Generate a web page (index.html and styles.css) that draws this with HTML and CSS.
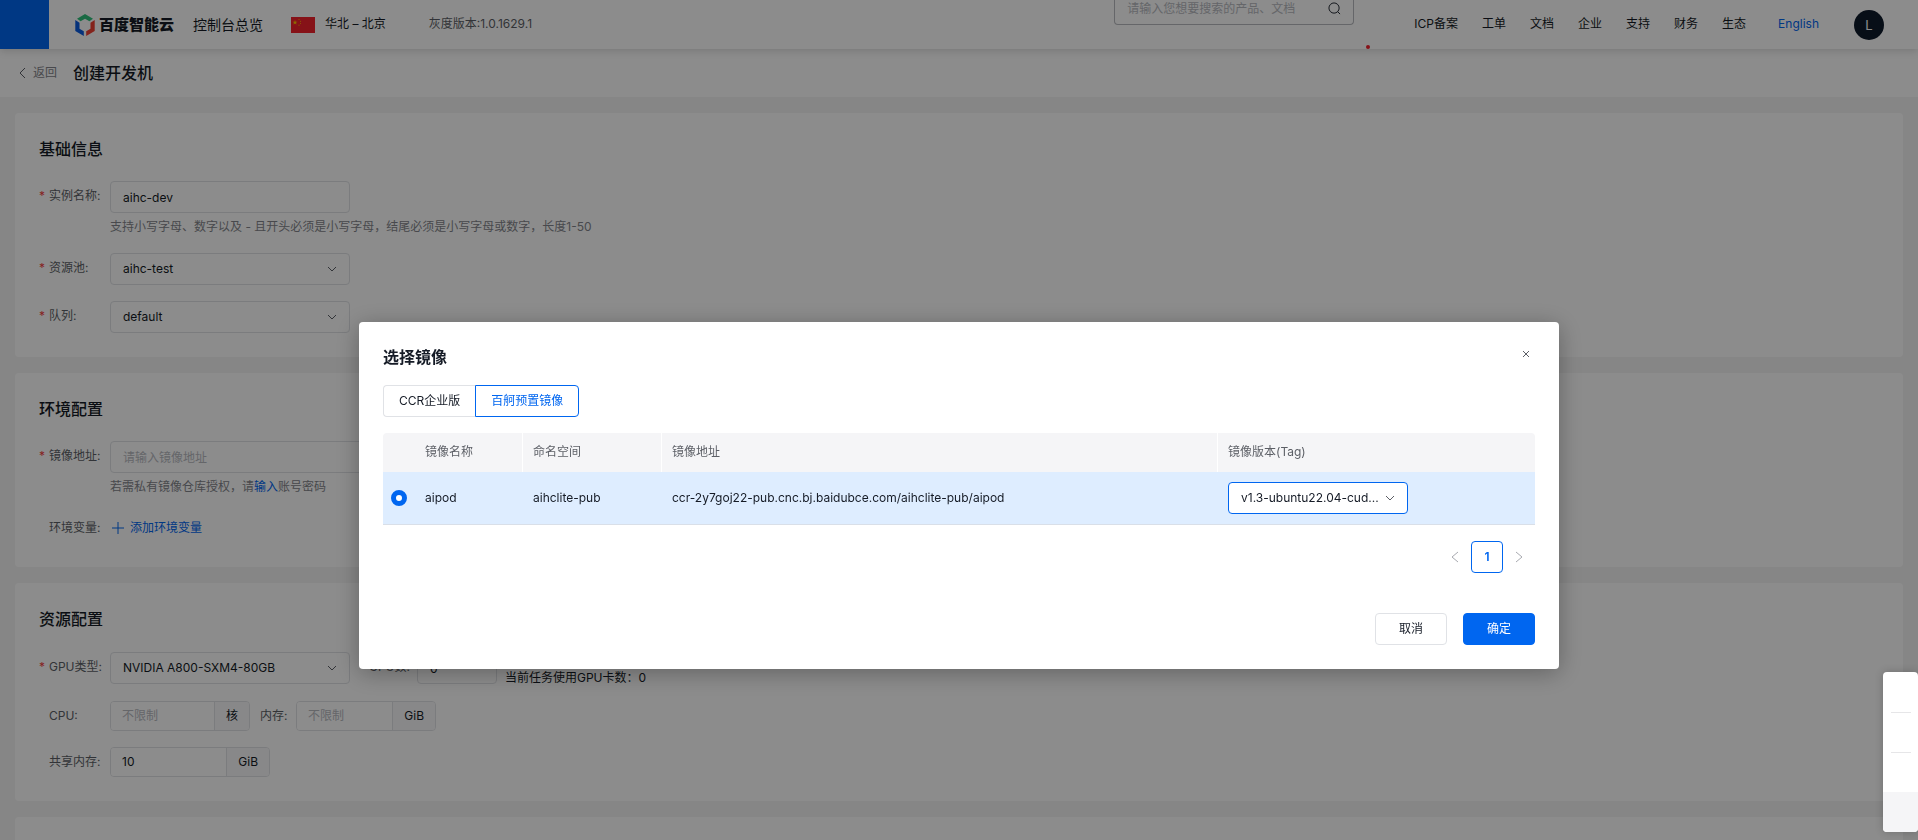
FILE: index.html
```html
<!DOCTYPE html>
<html lang="zh-CN">
<head>
<meta charset="utf-8">
<title>创建开发机</title>
<link rel="stylesheet" href="styles.css">
</head>
<body>
<svg class="defs" aria-hidden="true">
  <symbol id="chevron-down" viewBox="0 0 10 10"><path d="M1 3l4 4 4-4" fill="none" stroke="currentColor"/></symbol>
  <symbol id="chevron-left" viewBox="0 0 12 12"><path d="M9 1L4 6l5 5" fill="none" stroke="currentColor"/></symbol>
  <symbol id="chevron-right" viewBox="0 0 12 12"><path d="M3 1l6 5-6 5" fill="none" stroke="currentColor"/></symbol>
</svg>

<div class="page">
  <header class="topbar">
    <button class="menu" type="button" aria-label="菜单"></button>
    <a class="logo" href="#">
      <svg class="logo-mark" viewBox="0 0 20 22" aria-hidden="true">
        <path fill="#30c27c" d="M10 0l8 4.700-3.600 2.600L10 4.800 5.600 7.300 2 4.700z"/>
        <path fill="#0a5be0" d="M.3 6l4.200 2.700v6l4.300 2.500V22L.3 17z"/>
        <path fill="#f04134" d="M19.700 6l-4.200 2.700v6l-4.300 2.500V22l8.500-5z"/>
      </svg>
      <span>百度智能云</span>
    </a>
    <a class="overview" href="#">控制台总览</a>
    <div class="region">
      <svg class="flag" viewBox="0 0 24 16" aria-hidden="true">
        <rect width="24" height="16" fill="#f5222d"/>
        <path fill="#ffc400" d="M4 3l.6 1.700h1.800L5 5.800l.5 1.800L4 6.500 2.500 7.600 3 5.800 1.600 4.700h1.800z"/>
        <g fill="#ffa000"><circle cx="8" cy="2.500" r=".6"/><circle cx="9.500" cy="4.300" r=".6"/><circle cx="9.500" cy="6.500" r=".6"/><circle cx="8" cy="8.200" r=".6"/></g>
      </svg>
      <span>华北 – 北京</span>
    </div>
    <span class="version">灰度版本:1.0.1629.1</span>
    <div class="search">
      <input type="text" aria-label="搜索" placeholder="请输入您想要搜索的产品、文档">
      <svg viewBox="0 0 14 14" aria-hidden="true"><circle cx="6.500" cy="6.500" r="5.500" fill="none" stroke="currentColor"/><path d="M10.500 10.500L13 13" stroke="currentColor"/></svg>
    </div>
    <i class="dot"></i>
    <nav class="nav">
      <a href="#">ICP备案</a>
      <a href="#">工单</a>
      <a href="#">文档</a>
      <a href="#">企业</a>
      <a href="#">支持</a>
      <a href="#">财务</a>
      <a href="#">生态</a>
    </nav>
    <a class="lang" href="#">English</a>
    <button class="avatar" type="button">L</button>
  </header>

  <div class="subbar">
    <a class="back" href="#"><svg viewBox="0 0 12 12" aria-hidden="true"><use href="#chevron-left"/></svg>返回</a>
    <h1>创建开发机</h1>
  </div>

  <main class="content">
    <section class="card">
      <h2>基础信息</h2>
      <div class="row">
        <label class="label required" for="name">实例名称:</label>
        <div>
          <input class="field" id="name" type="text" value="aihc-dev">
          <p class="hint">支持小写字母、数字以及 - 且开头必须是小写字母，结尾必须是小写字母或数字，长度1-50</p>
        </div>
      </div>
      <div class="row">
        <label class="label required" for="pool">资源池:</label>
        <div class="select">
          <select class="field" id="pool"><option>aihc-test</option></select>
          <svg aria-hidden="true"><use href="#chevron-down"/></svg>
        </div>
      </div>
      <div class="row">
        <label class="label required" for="queue">队列:</label>
        <div class="select">
          <select class="field" id="queue"><option>default</option></select>
          <svg aria-hidden="true"><use href="#chevron-down"/></svg>
        </div>
      </div>
    </section>

    <section class="card">
      <h2>环境配置</h2>
      <div class="row">
        <label class="label required" for="image">镜像地址:</label>
        <div>
          <input class="field wide" id="image" type="text" placeholder="请输入镜像地址">
          <p class="hint">若需私有镜像仓库授权，请<a href="#">输入</a>账号密码</p>
        </div>
      </div>
      <div class="row">
        <span class="label">环境变量:</span>
        <button class="add" type="button"><svg viewBox="0 0 14 14" aria-hidden="true"><path d="M7 1v12M1 7h12" stroke="currentColor"/></svg>添加环境变量</button>
      </div>
    </section>

    <section class="card">
      <h2>资源配置</h2>
      <div class="row gpu">
        <label class="label required" for="gpu">GPU类型:</label>
        <div class="select">
          <select class="field" id="gpu"><option>NVIDIA A800-SXM4-80GB</option></select>
          <svg aria-hidden="true"><use href="#chevron-down"/></svg>
        </div>
        <label class="label inline-gpu" for="gpu-count">GPU数:</label>
        <input class="field count" id="gpu-count" type="text" value="0">
        <span class="usage">当前任务使用GPU卡数：0</span>
      </div>
      <div class="row">
        <label class="label" for="cpu">CPU:</label>
        <div class="group cpu"><input id="cpu" type="text" placeholder="不限制"><span>核</span></div>
        <label class="label inline-mem" for="mem">内存:</label>
        <div class="group mem"><input id="mem" type="text" placeholder="不限制"><span>GiB</span></div>
      </div>
      <div class="row">
        <label class="label" for="shm">共享内存:</label>
        <div class="group shm"><input id="shm" type="text" value="10"><span>GiB</span></div>
      </div>
    </section>

    <section class="card"></section>
  </main>
</div>

<div class="overlay">
  <div class="modal" role="dialog" aria-modal="true" aria-labelledby="dialog-title">
    <div class="modal-head">
      <h2 id="dialog-title">选择镜像</h2>
      <button class="close" type="button" aria-label="关闭"><svg viewBox="0 0 8 8" aria-hidden="true"><path d="M1 1l6 6M7 1L1 7" stroke="currentColor"/></svg></button>
    </div>
    <div class="tabs">
      <button type="button">CCR企业版</button>
      <button class="active" type="button">百舸预置镜像</button>
    </div>
    <table class="images">
      <colgroup><col class="c-radio"><col class="c-name"><col class="c-space"><col><col class="c-tag"></colgroup>
      <thead>
        <tr><th class="plain"></th><th>镜像名称</th><th>命名空间</th><th>镜像地址</th><th class="plain">镜像版本(Tag)</th></tr>
      </thead>
      <tbody>
        <tr>
          <td class="pick"><input type="radio" name="image" aria-label="aipod" checked></td>
          <td>aipod</td>
          <td>aihclite-pub</td>
          <td>ccr-2y7goj22-pub.cnc.bj.baidubce.com/aihclite-pub/aipod</td>
          <td>
            <div class="select tag">
              <select class="field" aria-label="镜像版本"><option>v1.3-ubuntu22.04-cud...</option></select>
              <svg aria-hidden="true"><use href="#chevron-down"/></svg>
            </div>
          </td>
        </tr>
      </tbody>
    </table>
    <nav class="pager" aria-label="分页">
      <button type="button" aria-label="上一页"><svg viewBox="0 0 12 12" aria-hidden="true"><path d="M9 1L3 6l6 5" fill="none" stroke="currentColor"/></svg></button>
      <button class="current" type="button">1</button>
      <button type="button" aria-label="下一页"><svg viewBox="0 0 12 12" aria-hidden="true"><use href="#chevron-right"/></svg></button>
    </nav>
    <div class="actions">
      <button type="button">取消</button>
      <button class="primary" type="button">确定</button>
    </div>
  </div>
</div>

<aside class="dock"><i></i><i></i><i></i><i></i></aside>
</body>
</html>
```

FILE: styles.css
```css
:root {
  --blue: #0066f0;
  --text: #151b26;
  --label: #5c5f66;
  --muted: #84868c;
  --faint: #b8babf;
  --line: #e0e2e6;
  --ground: #f5f5f5;
}

* { box-sizing: border-box; }

html, body { height: 100%; }

body {
  margin: 0;
  overflow: hidden;
  background: var(--ground);
  color: var(--text);
  font: 12px/20px Inter, "Noto Sans CJK SC", sans-serif;
}

input, select, button { font: inherit; color: inherit; margin: 0; }
button { padding: 0; border: 0; background: none; cursor: pointer; }
a { color: inherit; text-decoration: none; }
h1, h2, p { margin: 0; }
h1, h2 { font-size: 16px; line-height: 24px; font-weight: 500; }
::placeholder { color: var(--faint); opacity: 1; }
.defs { display: none; }

.topbar {
  position: relative;
  z-index: 1;
  display: flex;
  align-items: center;
  height: 49px;
  padding-right: 34px;
  background: #fff;
  box-shadow: 0 2px 8px rgba(0, 0, 0, .15);
  white-space: nowrap;
}
.menu { width: 49px; height: 49px; background: var(--blue); }
.logo { display: flex; align-items: center; gap: 4px; margin-left: 26px; font-size: 15px; font-weight: 900; }
.logo-mark { width: 20px; height: 22px; }
.overview { margin-left: 19px; font-size: 14px; }
.region { display: flex; align-items: center; gap: 10px; margin-left: 28px; }
.flag { width: 24px; height: 16px; }
.region span, .version, .nav, .lang { line-height: 18px; padding-bottom: 2px; }
.version { margin-left: 43px; color: var(--label); }
.search {
  position: relative;
  align-self: flex-start;
  width: 240px;
  height: 25px;
  margin-left: auto;
}
.search input {
  display: block;
  width: 100%;
  height: 25px;
  padding: 0 40px 7px 12px;
  border: 1px solid #b8babf;
  border-top: 0;
  border-radius: 0 0 4px 4px;
  background: #fff;
  outline: 0;
}
.search svg { position: absolute; top: 2px; right: 13px; width: 13px; height: 13px; }
.dot { align-self: flex-end; width: 4px; height: 4px; margin-left: 12px; border-radius: 50%; background: #f5222d; }
.nav { display: flex; gap: 24px; margin-left: 44px; }
.lang { margin-left: 32px; color: var(--blue); }
.avatar { width: 30px; height: 30px; margin-left: 35px; border-radius: 50%; background: #0e1a2b; color: #fff; font-size: 13px; }

.subbar { display: flex; align-items: center; gap: 16px; height: 48px; padding-left: 16px; background: #fff; }
.back { display: flex; align-items: center; gap: 5px; color: var(--muted); }
.back svg { width: 12px; height: 12px; color: var(--label); }

.content { display: flex; flex-direction: column; gap: 16px; padding: 16px 15px; }
.card {
  display: flex;
  flex-direction: column;
  gap: 16px;
  padding: 24px;
  border-radius: 4px;
  background: #fff;
}
.card h2 { margin-bottom: 4px; }
.row { display: flex; align-items: flex-start; }
.label {
  flex: none;
  display: flex;
  width: 71px;
  padding-left: 10px;
  line-height: 30px;
  color: var(--label);
}
.label.required { padding-left: 0; }
.required::before { content: "*"; width: 10px; color: #f33e3e; }
.label.inline-gpu { width: 67px; padding-left: 19px; }
.label.inline-mem { width: 46px; }

.field {
  display: block;
  width: 240px;
  height: 32px;
  padding: 0 12px;
  border: 1px solid var(--line);
  border-radius: 4px;
  background: #fff;
  appearance: none;
  outline: 0;
}
.field.wide { width: 400px; }
.field.count { width: 80px; }
.select { position: relative; }
.select svg { position: absolute; top: 11px; right: 13px; width: 10px; height: 10px; color: var(--label); pointer-events: none; }
.hint { margin-top: 4px; color: var(--muted); }
.hint a { color: var(--blue); }
.add { display: flex; align-items: center; gap: 5px; height: 30px; color: var(--blue); }
.add svg { width: 14px; height: 14px; margin-left: 1px; }

.gpu { height: 34px; padding-top: 1px; }
.usage { align-self: flex-end; margin-left: 8px; line-height: 14px; }
.group { display: flex; height: 30px; border: 1px solid var(--line); border-radius: 4px; overflow: hidden; }
.group input { flex: 1; min-width: 0; padding: 0 11px; border: 0; background: #fff; outline: 0; }
.group span { padding: 0 11px; border-left: 1px solid var(--line); background: #f7f7f9; line-height: 28px; }
.group.cpu { width: 140px; }
.group.mem { width: 140px; }
.group.shm { width: 160px; }

.overlay {
  position: fixed;
  inset: 0;
  z-index: 10;
  padding-top: 322px;
  background: rgba(0, 0, 0, .45);
}
.modal {
  max-width: 1200px;
  margin: 0 auto;
  padding: 24px;
  border-radius: 4px;
  background: #fff;
  box-shadow: 0 4px 24px rgba(0, 0, 0, .3);
}
.modal-head { display: flex; justify-content: space-between; margin-bottom: 17px; }
.modal-head h2 { line-height: 22px; font-weight: 600; }
.close { display: grid; place-items: center; width: 16px; height: 16px; margin-right: 1px; color: var(--label); }
.close svg { width: 8px; height: 8px; }

.tabs { display: flex; margin-bottom: 16px; }
.tabs button { height: 32px; padding: 0 15px; border: 1px solid var(--line); border-right: 0; border-radius: 4px 0 0 4px; }
.tabs .active { border: 1px solid var(--blue); border-radius: 0 4px 4px 0; color: var(--blue); }

.images { width: 100%; table-layout: fixed; border-collapse: separate; border-spacing: 0; }
.c-radio { width: 32px; }
.c-name { width: 108px; }
.c-space { width: 139px; }
.c-tag { width: 317px; }
.images th {
  height: 39px;
  padding: 0 10px 1px;
  border-right: 1px solid #fff;
  background: #f5f5f7;
  color: var(--label);
  font-weight: 400;
  text-align: left;
}
.images th.plain { border-right: 0; }
.images th:first-child { border-radius: 4px 0 0 0; }
.images th:last-child { border-radius: 0 4px 0 0; }
.images td { padding: 10px; border-bottom: 1px solid #d9dfe8; background: #deedff; }
.images .pick { padding: 0 8px; }
.pick input { display: block; width: 16px; height: 16px; border: 5px solid var(--blue); border-radius: 50%; background: #fff; appearance: none; }
.tag, .tag .field { width: 180px; }
.tag .field { border-color: var(--blue); }

.pager { display: flex; justify-content: flex-end; margin-top: 16px; }
.pager button { display: grid; place-items: center; width: 32px; height: 32px; color: #a8aab0; }
.pager svg { width: 12px; height: 12px; }
.pager .current { border: 1px solid var(--blue); border-radius: 4px; color: var(--blue); font-weight: 600; }

.actions { display: flex; justify-content: flex-end; gap: 16px; margin-top: 40px; }
.actions button { width: 72px; height: 32px; border: 1px solid var(--line); border-radius: 4px; }
.actions .primary { border-color: var(--blue); background: var(--blue); color: #fff; }

.dock {
  position: fixed;
  right: 0;
  bottom: 8px;
  z-index: 20;
  width: 35px;
  border-radius: 4px;
  background: #fff;
  box-shadow: 0 0 8px rgba(0, 0, 0, .2);
  overflow: hidden;
}
.dock i { display: flex; justify-content: center; height: 40px; }
.dock i:nth-child(2)::before, .dock i:nth-child(3)::before { content: ""; width: 20px; height: 1px; background: #e6e6e8; }
.dock i:last-child { background: #f5f5f7; }
```
